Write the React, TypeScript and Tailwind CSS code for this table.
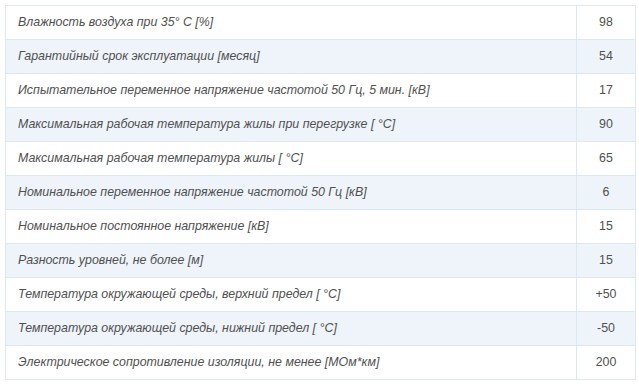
import React from 'react';

const rows: [string, string][] = [
  ['Влажность воздуха при 35° C [%]', '98'],
  ['Гарантийный срок эксплуатации [месяц]', '54'],
  ['Испытательное переменное напряжение частотой 50 Гц, 5 мин. [кВ]', '17'],
  ['Максимальная рабочая температура жилы при перегрузке [ °C]', '90'],
  ['Максимальная рабочая температура жилы [ °C]', '65'],
  ['Номинальное переменное напряжение частотой 50 Гц [кВ]', '6'],
  ['Номинальное постоянное напряжение [кВ]', '15'],
  ['Разность уровней, не более [м]', '15'],
  ['Температура окружающей среды, верхний предел [ °C]', '+50'],
  ['Температура окружающей среды, нижний предел [ °C]', '-50'],
  ['Электрическое сопротивление изоляции, не менее [МОм*км]', '200'],
];

export default function App() {
  return (
    <div className="w-[639px] h-[384px] bg-white pl-[5px] pt-[5px] font-['Liberation_Sans',Arial,sans-serif]">
      <table className="w-[631px] border-collapse text-[12.4px] text-[#505050]">
        <tbody>
          {rows.map(([name, value], i) => (
            <tr key={i} className={i % 2 === 1 ? 'bg-[#eef4fa]' : 'bg-white'}>
              <td className="h-[34px] border border-[#dde7f0] pl-3 italic">{name}</td>
              <td className="h-[34px] w-[59px] border border-[#dde7f0] text-center">{value}</td>
            </tr>
          ))}
        </tbody>
      </table>
    </div>
  );
}
